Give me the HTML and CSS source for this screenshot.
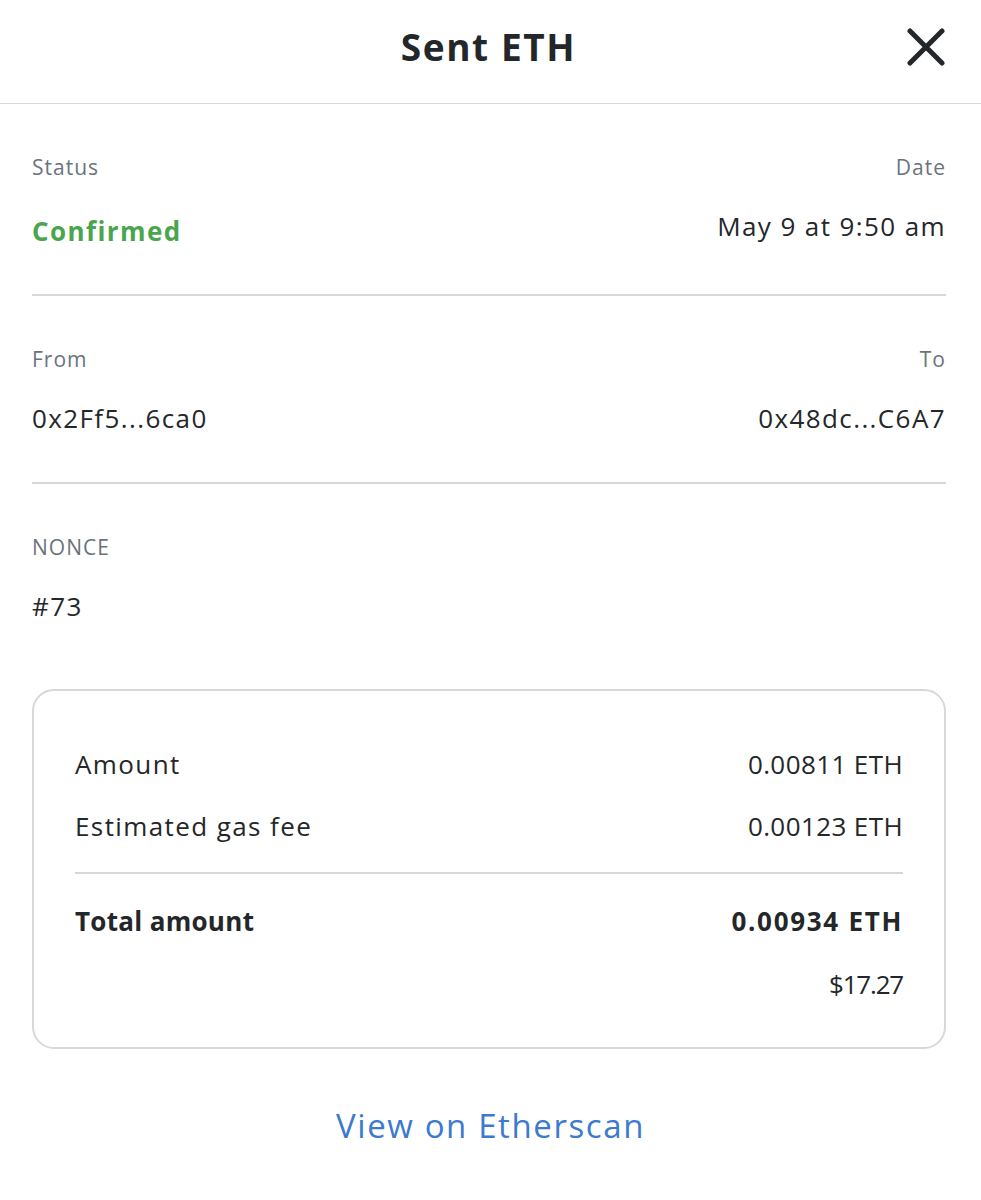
FILE: index.html
```html
<!DOCTYPE html>
<html lang="en">
<head>
<meta charset="utf-8">
<title>Sent ETH</title>
<link rel="stylesheet" href="styles.css">
</head>
<body>
<div class="page">
  <header class="header">
    <div class="header-side"></div>
    <h1 class="title">Sent ETH</h1>
    <div class="header-side header-right">
      <button class="close" aria-label="Close">
        <svg width="38" height="38" viewBox="0 0 38 38"><path d="M3 3 L35 35 M35 3 L3 35" stroke="#24272a" stroke-width="5" stroke-linecap="round" fill="none"/></svg>
      </button>
    </div>
  </header>

  <section class="section first">
    <div class="row labels">
      <span class="label">Status</span>
      <span class="label">Date</span>
    </div>
    <div class="row values">
      <span class="status">Confirmed</span>
      <span class="value date">May 9 at 9:50 am</span>
    </div>
  </section>

  <section class="section second">
    <div class="row labels">
      <span class="label">From</span>
      <span class="label">To</span>
    </div>
    <div class="row values">
      <span class="value">0x2Ff5...6ca0</span>
      <span class="value">0x48dc...C6A7</span>
    </div>
  </section>

  <section class="section nonce">
    <div class="row labels">
      <span class="label">NONCE</span>
    </div>
    <div class="row values">
      <span class="value">#73</span>
    </div>
  </section>

  <div class="card">
    <div class="card-row">
      <span class="k">Amount</span>
      <span class="v">0.00811 ETH</span>
    </div>
    <div class="card-row">
      <span class="k">Estimated gas fee</span>
      <span class="v">0.00123 ETH</span>
    </div>
    <div class="card-divider"></div>
    <div class="card-row total">
      <span class="k">Total amount</span>
      <span class="v">0.00934 ETH</span>
    </div>
    <div class="card-row fiat">
      <span class="v">$17.27</span>
    </div>
  </div>

  <div class="link-wrap">
    <a class="link" href="#">View on Etherscan</a>
  </div>
</div>
</body>
</html>
```
FILE: styles.css
```css
* { box-sizing: border-box; }
html, body { margin: 0; padding: 0; background: #fff; }
body {
  font-family: "Open Sans", "Liberation Sans", sans-serif;
  color: #24272a;
}
.page { width: 981px; }

.header {
  height: 104px;
  border-bottom: 1px solid #d6d9dc;
  display: grid;
  grid-template-columns: 1fr auto 1fr;
  align-items: center;
  padding: 0 36px 10px 32px;
}
.title {
  margin: 0;
  font-size: 37px;
  font-weight: 700;
  line-height: 46px;
  letter-spacing: 1.6px;
  color: #24272a;
}
.header-right { display: flex; justify-content: flex-end; }
.close {
  border: 0;
  background: none;
  padding: 0;
  margin: 0;
  width: 38px;
  height: 38px;
  display: flex;
  cursor: pointer;
}

.section {
  margin: 0 35px 0 32px;
  padding: 50px 0 49px;
  border-bottom: 2px solid #d6d9dc;
}
.section.first { padding-bottom: 51px; }
.section.second { padding-bottom: 47px; }
.section.nonce { border-bottom: 0; padding-bottom: 66px; }
.row { display: flex; justify-content: space-between; }
.labels { height: 26px; align-items: center; }
.values { height: 34px; align-items: center; margin-top: 29px; }
.label {
  font-size: 21px;
  line-height: 26px;
  letter-spacing: 1px;
  color: #6a737d;
}
.value {
  font-size: 26px;
  line-height: 34px;
  letter-spacing: 1.4px;
  color: #24272a;
}
.status {
  font-size: 26px;
  line-height: 34px;
  font-weight: 700;
  color: #4aa54e;
  letter-spacing: 1.4px;
  position: relative;
  top: 5px;
}

.card {
  margin: 0 35px 0 32px;
  border: 2px solid #d6d9dc;
  border-radius: 22px;
  padding: 56px 41px 46px;
}
.card-row {
  display: flex;
  justify-content: space-between;
  font-size: 26px;
  line-height: 34px;
  height: 34px;
  align-items: center;
}
.card-row .k { letter-spacing: 1.4px; }
.card-row .v { letter-spacing: 0.4px; }
.card-row + .card-row { margin-top: 28px; }
.card-divider {
  height: 2px;
  background: #d6d9dc;
  margin: 29px 0 30px;
}
.card-row.total { font-weight: 700; }
.card-row.total .k { letter-spacing: 0.3px; }
.card-row.total .v { letter-spacing: 1.7px; }
.card-row.fiat { justify-content: flex-end; margin-top: 29px; }
.card-row.fiat .v { letter-spacing: -1.2px; }

.link-wrap {
  display: flex;
  justify-content: center;
  padding-top: 57px;
}
.link {
  font-size: 33px;
  line-height: 40px;
  letter-spacing: 1.6px;
  color: #3b7acf;
  text-decoration: none;
}
```
